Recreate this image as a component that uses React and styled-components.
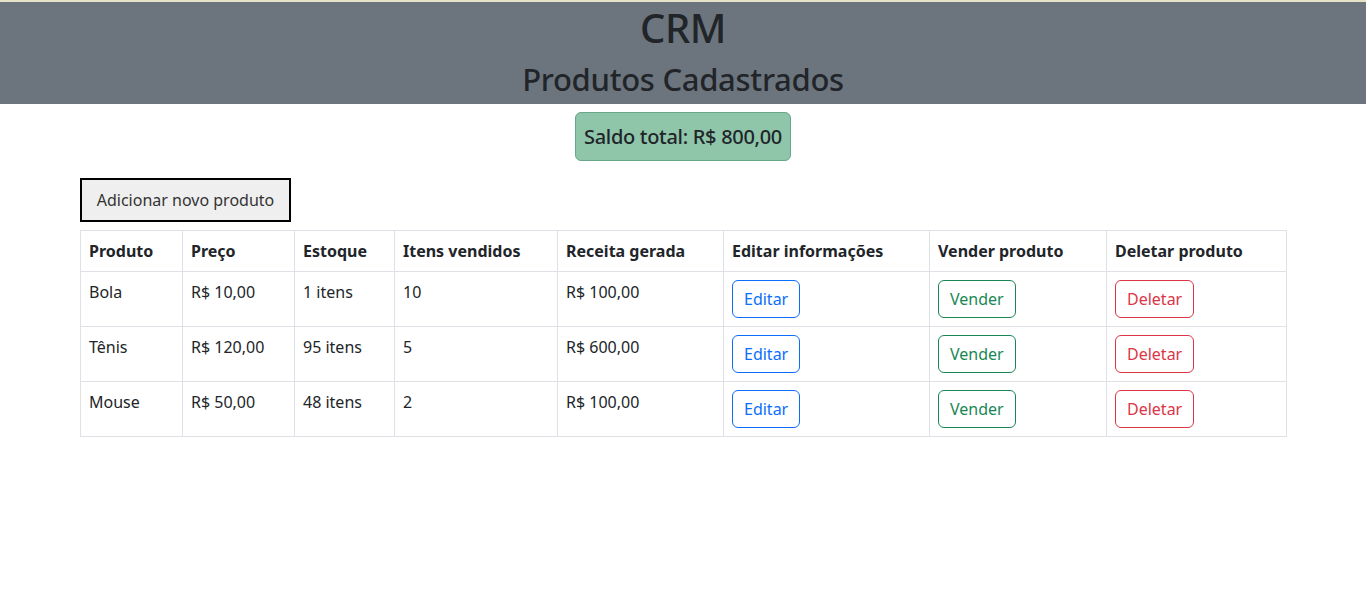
import styled, { createGlobalStyle } from 'styled-components';

const GlobalStyle = createGlobalStyle`
    body {
        margin: 0;
        border-top: 2px solid #e6e2c8;
        font-family: "Noto Sans", "Open Sans", sans-serif;
        color: #212529;
        background: #fff;
    }
`

const produtos = [
    { nome: 'Bola', preco: 'R$ 10,00', estoque: '1 itens', vendidos: '10', receita: 'R$ 100,00' },
    { nome: 'Tênis', preco: 'R$ 120,00', estoque: '95 itens', vendidos: '5', receita: 'R$ 600,00' },
    { nome: 'Mouse', preco: 'R$ 50,00', estoque: '48 itens', vendidos: '2', receita: 'R$ 100,00' },
]

const colunas = [
    ['Produto', 102],
    ['Preço', 112],
    ['Estoque', 100],
    ['Itens vendidos', 163],
    ['Receita gerada', 166],
    ['Editar informações', 206],
    ['Vender produto', 177],
    ['Deletar produto', 180],
]

function App() {
    return (
        <>
            <GlobalStyle />
            <Header>
                <Title>CRM</Title>
                <Subtitle>Produtos Cadastrados</Subtitle>
            </Header>
            <Main>
                <Saldo>Saldo total: R$ 800,00</Saldo>
                <AddButton>Adicionar novo produto</AddButton>
                <Table>
                    <colgroup>
                        {colunas.map(([nome, w]) => <col key={nome} width={w} />)}
                    </colgroup>
                    <thead>
                        <tr>
                            {colunas.map(([nome]) => <Th key={nome}>{nome}</Th>)}
                        </tr>
                    </thead>
                    <tbody>
                        {produtos.map((p) => (
                            <tr key={p.nome}>
                                <Td>{p.nome}</Td>
                                <Td>{p.preco}</Td>
                                <Td>{p.estoque}</Td>
                                <Td>{p.vendidos}</Td>
                                <Td>{p.receita}</Td>
                                <Td><OutlineButton color="#0d6efd">Editar</OutlineButton></Td>
                                <Td><OutlineButton color="#198754">Vender</OutlineButton></Td>
                                <Td><OutlineButton color="#dc3545">Deletar</OutlineButton></Td>
                            </tr>
                        ))}
                    </tbody>
                </Table>
            </Main>
        </>
    )
}

const Header = styled.header`
    background: #6c757d;
    text-align: center;
    padding: 2px 0 6px;
`

const Title = styled.h1`
    margin: 0 0 8px;
    font-size: 40px;
    font-weight: 500;
    line-height: 48px;
    letter-spacing: -0.5px;
`

const Subtitle = styled.h2`
    margin: 0;
    font-size: 31px;
    font-weight: 500;
    line-height: 38px;
    letter-spacing: -0.3px;
`

const Main = styled.main`
    display: flex;
    flex-direction: column;
    align-items: flex-start;
    padding: 8px 80px;
`

const Saldo = styled.div`
    align-self: center;
    background: #8fc5a9;
    border: 1px solid #6aa68a;
    border-radius: 6px;
    padding: 12px 8px 11px;
    font-size: 20px;
    font-weight: 500;
    line-height: 24px;
    letter-spacing: -0.3px;
    margin-bottom: 17px;
`

const AddButton = styled.button`
    width: 211px;
    height: 44px;
    background: #efefef;
    border: 2px solid #000;
    font-family: inherit;
    font-size: 16px;
    color: #333;
    margin-bottom: 8px;
`

const Table = styled.table`
    width: 1206px;
    table-layout: fixed;
    border-collapse: collapse;
    font-size: 16px;
    line-height: 24px;
`

const Th = styled.th`
    text-align: left;
    font-weight: 700;
    padding: 8px;
    border: 1px solid #dee2e6;
    white-space: nowrap;
`

const Td = styled.td`
    padding: 8px;
    border: 1px solid #dee2e6;
    vertical-align: top;
    white-space: nowrap;
`

const OutlineButton = styled.button`
    background: transparent;
    border: 1px solid ${(p) => p.color};
    color: ${(p) => p.color};
    border-radius: 6px;
    padding: 6px 11px;
    font-family: inherit;
    font-size: 16px;
    line-height: 24px;
`

export default App
